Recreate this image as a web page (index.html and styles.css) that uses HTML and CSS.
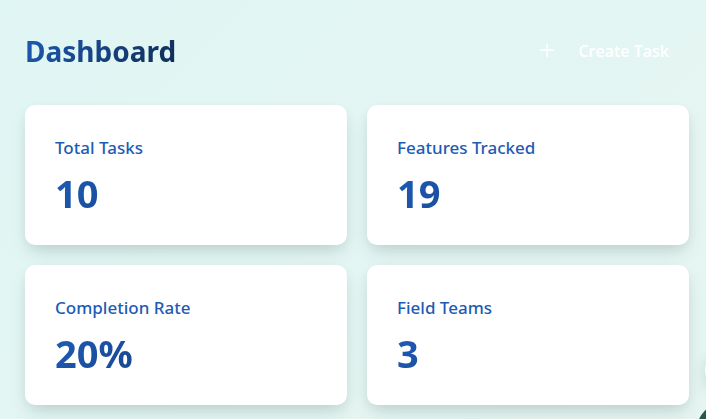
FILE: index.html
```html
<!DOCTYPE html>
<html lang="en">
<head>
<meta charset="utf-8">
<meta name="viewport" content="width=device-width, initial-scale=1">
<title>Dashboard</title>
<link rel="stylesheet" href="styles.css">
</head>
<body>
<main class="page">
  <header class="page-header">
    <h1 class="title">Dashboard</h1>
    <button class="create" type="button">
      <svg class="create-icon" viewBox="0 0 14 14" aria-hidden="true"><path d="M7 0v13M0 6h14"/></svg>
      Create Task
    </button>
  </header>
  <section class="stats">
    <article class="card"><h2 class="label">Total Tasks</h2><p class="value">10</p></article>
    <article class="card"><h2 class="label">Features Tracked</h2><p class="value">19</p></article>
    <article class="card"><h2 class="label">Completion Rate</h2><p class="value">20%</p></article>
    <article class="card"><h2 class="label">Field Teams</h2><p class="value">3</p></article>
  </section>
</main>
<div class="bubble bubble-light"></div>
<div class="bubble bubble-dark"></div>
</body>
</html>
```

FILE: styles.css
```css
* { box-sizing: border-box; }
body {
  margin: 0;
  min-height: 100vh;
  overflow: hidden;
  font-family: "Segoe UI", "Noto Sans", "Open Sans", sans-serif;
  background: linear-gradient(135deg, #e0f6f4, #e6f5f2);
}
.page { padding: 25px 17px 14px 25px; }
.page-header {
  display: flex;
  align-items: center;
  justify-content: space-between;
  height: 52px;
  margin-bottom: 28px;
}
.title, .value {
  margin: 0;
  font-weight: 700;
  color: transparent;
  background: linear-gradient(135deg, #1e5bb8, #0f2b50);
  -webkit-background-clip: text;
  background-clip: text;
}
.title { font-size: 28px; line-height: 40px; }
.create {
  display: flex;
  align-items: center;
  gap: 24px;
  padding: 12px 20px;
  border: 0;
  background: transparent;
  color: #fff;
  font: 600 16px/24px "Segoe UI", "Open Sans", "Noto Sans", sans-serif;
}
.create-icon {
  width: 14px;
  height: 14px;
  fill: none;
  stroke: currentColor;
  stroke-width: 1.4;
}
.stats {
  display: grid;
  grid-template-columns: 1fr 1fr;
  gap: 20px;
}
.card {
  padding: 30px;
  border-radius: 10px;
  background: #fff;
  box-shadow:
    0 10px 20px -5px rgba(15, 50, 40, 0.15),
    0 4px 12px -2px rgba(15, 50, 40, 0.08);
}
.label {
  margin: 0 0 10px;
  font-size: 17px;
  font-weight: 500;
  line-height: 26px;
  color: #1e5bb5;
}
.value { font-size: 38px; line-height: 44px; }
.bubble {
  position: fixed;
  border-radius: 50%;
}
.bubble-light {
  left: 705px;
  top: 350px;
  width: 40px;
  height: 40px;
  background: #fff;
  box-shadow: 0 4px 15px rgba(15, 60, 50, 0.15);
}
.bubble-dark {
  left: 696px;
  top: 402px;
  width: 60px;
  height: 60px;
  background: #24584f;
}
```
